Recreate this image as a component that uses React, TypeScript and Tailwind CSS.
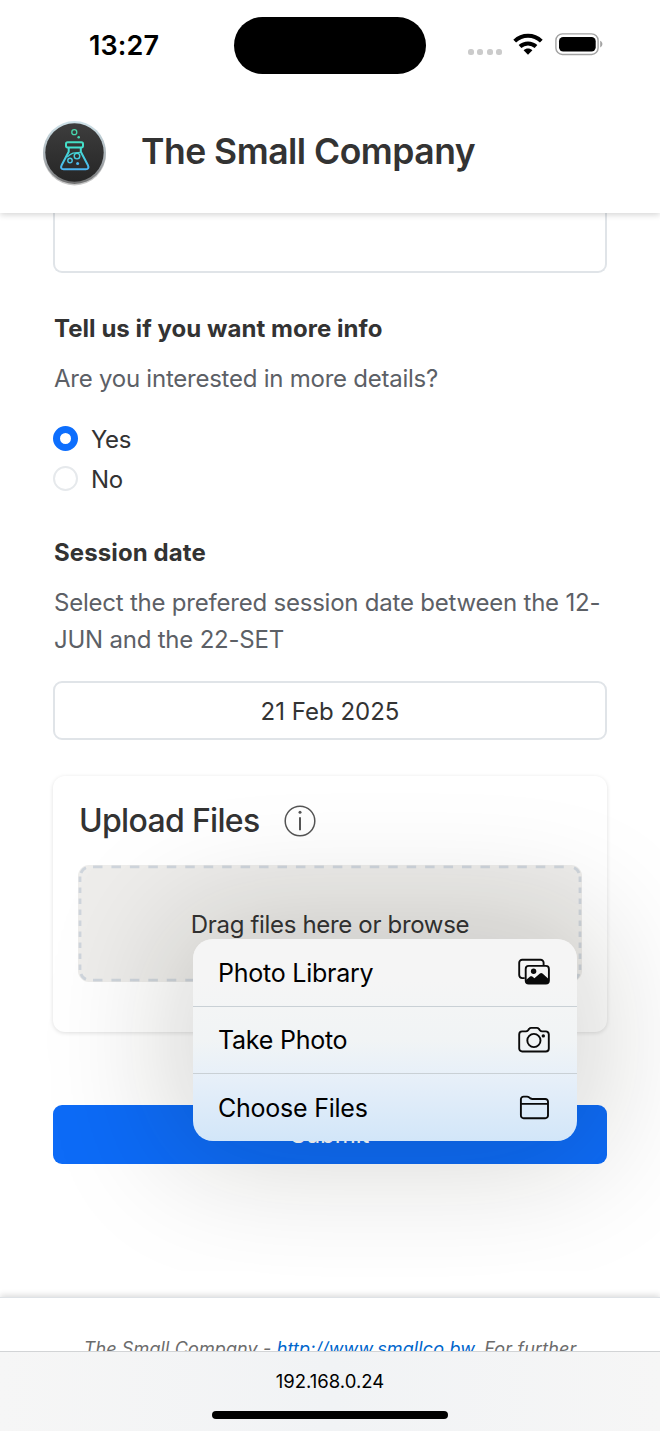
import type { ReactNode } from "react";

const MENU: { label: string; icon: ReactNode }[] = [
  { label: "Photo Library", icon: <PhotosIcon /> },
  { label: "Take Photo", icon: <CameraIcon /> },
  { label: "Choose Files", icon: <FolderIcon /> },
];

function PhotosIcon() {
  return (
    <svg width="34" height="28" viewBox="0 0 34 28" fill="none" stroke="#0a0a0a" strokeWidth="1.9">
      <path d="M7.7 20.1H5.2a3 3 0 0 1-3-3V4.7a3 3 0 0 1 3-3h18.4a3 3 0 0 1 3 3v2.2" />
      <rect x="8.7" y="7.9" width="23.2" height="17.6" rx="3" />
      <circle cx="16.6" cy="13.2" r="2.7" fill="#0a0a0a" stroke="none" />
      <path d="M8.7 22.2l4.4-3.6c.8-.6 1.5-.6 2.2 0l2.1 1.7 5.5-4.7c.9-.8 1.7-.8 2.6 0l6.4 5.6v2.3a2 2 0 0 1-2 2H10.7a2 2 0 0 1-2-2z" fill="#0a0a0a" stroke="none" />
    </svg>
  );
}

function CameraIcon() {
  return (
    <svg width="34" height="28" viewBox="0 0 34 28" fill="none" stroke="#0a0a0a" strokeWidth="1.9" strokeLinejoin="round">
      <path d="M5.2 5.4h3.7c1 0 1.5-.3 2.1-1l1.1-1.5c.6-.7 1.2-1 2.1-1h5.6c.9 0 1.5.3 2.1 1l1.1 1.5c.6.7 1.1 1 2.1 1h3.7a3 3 0 0 1 3 3v14.1a3 3 0 0 1-3 3H5.2a3 3 0 0 1-3-3V8.4a3 3 0 0 1 3-3z" />
      <circle cx="16.9" cy="14.5" r="6.6" />
      <circle cx="26.3" cy="9.9" r="1.7" fill="#0a0a0a" stroke="none" />
    </svg>
  );
}

function FolderIcon() {
  return (
    <svg width="34" height="28" viewBox="0 0 34 28" fill="none" stroke="#0a0a0a" strokeWidth="1.9" strokeLinejoin="round">
      <path d="M3.9 21.5V5.3a2.7 2.7 0 0 1 2.7-2.7h3.5c.8 0 1.3.2 1.9.7l1.5 1.1c.6.4 1 .6 1.8.6h13a2.7 2.7 0 0 1 2.7 2.7v13.8a2.7 2.7 0 0 1-2.7 2.7H6.6a2.7 2.7 0 0 1-2.7-2.7zM3.9 9.9h27.1" />
    </svg>
  );
}

function Logo() {
  return (
    <svg width="66" height="68" viewBox="0 0 66 68" fill="none">
      <defs>
        <linearGradient id="rim" x1="0" y1="0" x2="0" y2="1">
          <stop stopColor="#cfe3ea" />
          <stop offset=".6" stopColor="#a9b0b5" />
          <stop offset="1" stopColor="#6f6f6f" />
        </linearGradient>
        <linearGradient id="disc" x1="0" y1="0" x2="0" y2="1">
          <stop stopColor="#3d3d3d" />
          <stop offset="1" stopColor="#262626" />
        </linearGradient>
        <linearGradient id="flask" gradientUnits="userSpaceOnUse" x1="0" y1="9" x2="0" y2="51">
          <stop stopColor="#48d6a4" />
          <stop offset=".45" stopColor="#43e0d0" />
          <stop offset="1" stopColor="#4cb2f5" />
        </linearGradient>
      </defs>
      <circle cx="32.5" cy="34" r="31.5" fill="#000" fillOpacity=".22" />
      <circle cx="32.5" cy="32.5" r="31.5" fill="url(#rim)" />
      <circle cx="32.5" cy="32.5" r="29.2" fill="url(#disc)" />
      <g stroke="url(#flask)" strokeWidth="2" strokeLinejoin="round">
        <rect x="24" y="22.3" width="17" height="5.1" rx="1.6" />
        <path d="M26.7 27.5v4.3l-7 13.2c-1.2 2.5-.5 4.3 1.9 4.3h22.3c2.4 0 3.1-1.8 1.9-4.3l-7-13.2v-4.3" />
        <path d="M25.2 37.2c4.3-4.6 7-4.6 14-5" strokeWidth="1.2" />
        <circle cx="32.3" cy="12.2" r="2.5" strokeWidth="1.3" />
        <circle cx="35" cy="36.1" r="2.8" strokeWidth="1.4" />
        <circle cx="28" cy="40.5" r="2.2" strokeWidth="1.4" />
      </g>
      <circle cx="36.7" cy="17.2" r="1.3" fill="#43d9b5" />
      <circle cx="35.6" cy="43.4" r="1.5" fill="#4cb8f0" />
    </svg>
  );
}

function StatusBar() {
  return (
    <div className="flex h-[90px] items-start text-black">
      <div className="ml-[89px] mt-[28px] w-[145px] text-[27px] leading-[35px] font-semibold tracking-[0.1px]">13:27</div>
      <div className="mt-[17px] h-[56.5px] w-[192px] rounded-full bg-black" />
      <div className="mt-[49px] ml-[42px] flex gap-[3.3px]">
        {[0, 1, 2, 3].map(i => (
          <span key={i} className="size-[6px] rounded-[2.5px] bg-[#cbcbcb]" />
        ))}
      </div>
      <svg className="mt-[33px] ml-[11px]" width="30" height="22" viewBox="0 0 30 22" fill="none" stroke="#000" strokeWidth="4">
        <path d="M1.7 8.1C9.2.9 20.8.9 28.3 8.1" />
        <path d="M7 13.6c4.6-4.2 11.4-4.2 16 0" />
        <path d="M10.6 17.3c2.6-2.3 6.2-2.3 8.8 0L15 21.7z" fill="#000" stroke="none" />
      </svg>
      <svg className="mt-[33px] ml-[12px]" width="49" height="23" viewBox="0 0 49 23" fill="none">
        <rect x=".9" y=".9" width="42.2" height="20.6" rx="6.5" stroke="#a3a3a3" strokeWidth="1.4" />
        <rect x="4" y="4" width="36.7" height="14.5" rx="4.2" fill="#000" />
        <path d="M45.2 7.8c2.9 1.2 2.9 5.5 0 6.7z" fill="#a3a3a3" />
      </svg>
    </div>
  );
}

// long horizontal dashes, short vertical ones
function DashedOutline() {
  return (
    <svg className="absolute inset-0" width="504" height="117" viewBox="0 0 504 117" fill="none" stroke="#cfd5dc" strokeWidth="2.8">
      <path d="M15 1.9H489M15 115.1H489" strokeDasharray="9.5 8.95" />
      <path d="M2 11.5V106M502 11.5V106" strokeDasharray="5.5 5.5" />
      <path d="M3 8Q4.5 4 8 2.7M496 2.7Q499.5 4 501 8M3 109Q4.5 113 8 114.3M496 114.3Q499.5 113 501 109" />
    </svg>
  );
}

export default function App() {
  return (
    <div className="flex h-[1431px] w-[660px] flex-col overflow-hidden bg-white font-['Inter',sans-serif] text-[#333]">
      <header className="relative z-10 h-[213px] shrink-0 bg-white shadow-[0_2px_6px_rgba(0,0,0,0.16)]">
        <StatusBar />
        <div className="flex items-start pl-[42px] pt-[30px]">
          <Logo />
          <h1 className="ml-[33px] mt-[2px] text-[35.5px] leading-[60px] font-semibold tracking-[-0.5px]">The Small Company</h1>
        </div>
      </header>

      <main className="flex h-[1084px] shrink-0 flex-col px-[53px]">
        <div className="h-[60px] shrink-0 rounded-b-[9px] border-2 border-t-0 border-[#e0e4e8]" />

        <h2 className="mt-[37px] pl-px text-[24px] leading-[38px] font-bold tracking-[0.05px]">Tell us if you want more info</h2>
        <p className="mt-[12px] pl-px text-[24px] leading-[37px] tracking-[-0.24px] text-[#5c6066]">Are you interested in more details?</p>
        <div className="mt-[21px] flex flex-col text-[24px] tracking-[-0.4px]">
          <label className="flex h-[40px] items-center gap-[13px]">
            <span className="size-[25px] rounded-full border-[7px] border-[#0d6efd]" />
            <span className="pt-[3px]">Yes</span>
          </label>
          <label className="flex h-[40px] items-center gap-[13px]">
            <span className="size-[25px] rounded-full border-2 border-[#e6e9ec]" />
            <span className="pt-[3px]">No</span>
          </label>
        </div>

        <h2 className="mt-[36px] pl-px text-[24px] leading-[38px] font-bold tracking-[0.1px]">Session date</h2>
        <p className="mt-[12px] pl-px text-[24px] leading-[37px] tracking-[-0.22px] whitespace-nowrap text-[#5c6066]">
          Select the prefered session date between the 12-
          <br />
          JUN and the 22-SET
        </p>
        <div className="mt-[23px] flex h-[59px] items-center justify-center rounded-[9px] border-2 border-[#e0e4e8] pt-[2px] text-[24px]">
          21 Feb 2025
        </div>

        <section className="mt-[36px] h-[256px] rounded-[12px] px-[25px] pt-[21px] shadow-[0_1px_4px_rgba(0,0,0,0.13)]">
          <div className="flex h-[48px] items-center gap-[24px] pl-px">
            <h3 className="text-[32px] font-medium tracking-[-0.68px]">Upload Files</h3>
            <svg width="32" height="32" viewBox="0 0 32 32" fill="none" stroke="#555">
              <circle cx="16" cy="16" r="14.8" strokeWidth="1.5" />
              <path d="M16 12.3v13" strokeWidth="2" />
              <circle cx="16" cy="7.3" r="1.5" fill="#555" stroke="none" />
            </svg>
          </div>
          <div className="relative mt-[20px] flex h-[117px] items-center justify-center rounded-[11px] bg-[#eeedeb] text-[24px] tracking-[-0.33px]">
            <DashedOutline />
            <span className="pt-[2px]">Drag files here or browse</span>
            <div className="absolute top-[74px] right-[5px] z-20 h-[202px] w-[384px] rounded-[20px] shadow-[0_0_130px_20px_rgba(20,20,10,0.18)]">
              <div className="flex h-full flex-col divide-y divide-[#c9d0d5] overflow-hidden rounded-[20px] bg-[linear-gradient(180deg,#f5f5f5_20%,#f1f4f5_50%,#e6eff9_70%,#d2e6f9)] text-black">
                {MENU.map(item => (
                  <div key={item.label} className="flex flex-1 items-center justify-between pr-[26px] pl-[25px] text-[25px]">
                    <span className="pt-[2px] tracking-[-0.24px]">{item.label}</span>
                    {item.icon}
                  </div>
                ))}
              </div>
            </div>
          </div>
        </section>

        <button className="mt-[73px] h-[59px] shrink-0 rounded-[9px] bg-[#0d6bf7] text-[24px] text-white">Submit</button>
      </main>

      <footer className="h-[54px] shrink-0 overflow-hidden border-t border-[#dee2e6] bg-white pt-[37px] text-center text-[18px] leading-[27px] tracking-[0.12px] text-[#6c6c6c] italic shadow-[0_-2px_6px_rgba(0,0,0,0.14)]">
        The Small Company - <a className="text-[#0066cc]">http://www.smallco.bw</a>. For further
      </footer>
      <div className="relative z-30 flex h-[80px] shrink-0 flex-col items-center border-t border-[#d2d4d6] bg-linear-to-r from-[#f6f6f6] via-[#f1f3f5] to-[#f6f6f6] text-black">
        <span className="mt-[15px] text-[18.5px] leading-[28px]">192.168.0.24</span>
        <div className="mt-[16px] h-[8px] w-[236px] rounded-full bg-black" />
      </div>
    </div>
  );
}
